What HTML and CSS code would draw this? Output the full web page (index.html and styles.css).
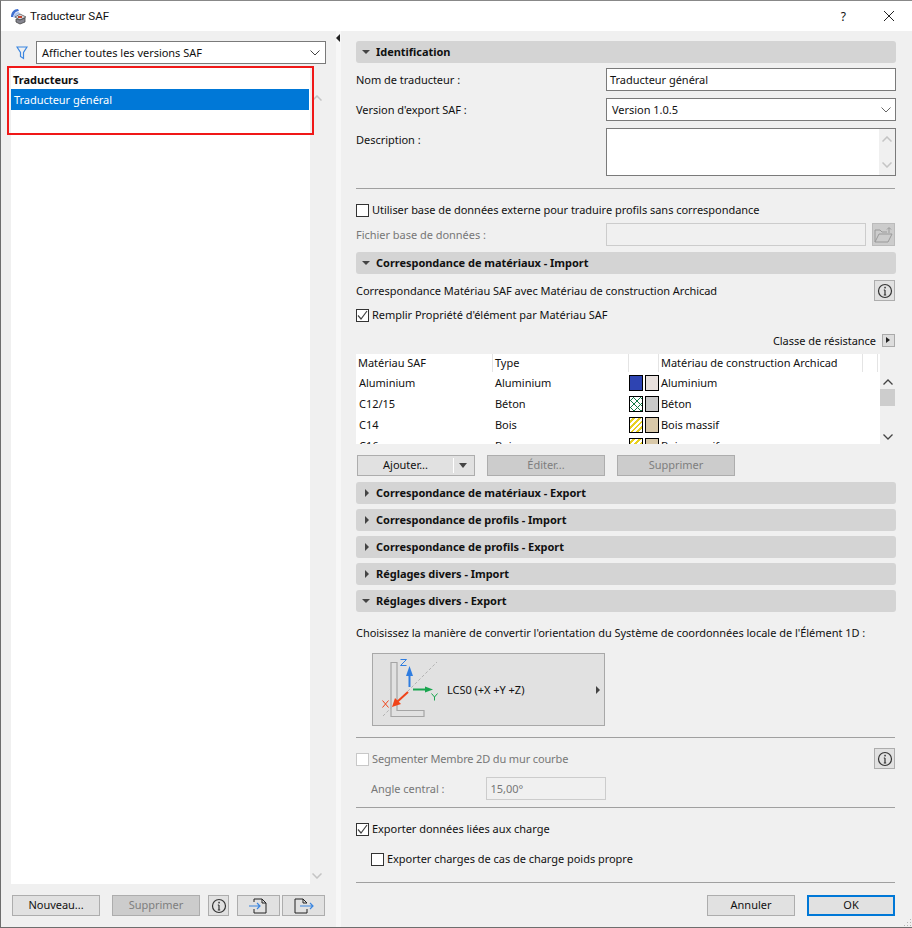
FILE: index.html
```html
<!DOCTYPE html>
<html lang="fr">
<head>
<meta charset="utf-8">
<title>Traducteur SAF</title>
<link rel="stylesheet" href="styles.css">
</head>
<body>
<div class="window">
  <header class="titlebar">
    <svg class="appicon" width="17" height="17" viewBox="0 0 17 17"><path d="M1 9 C1 4 4 1 8 1 L9 3 C6 3 4 5 3 9 Z" fill="#3f6fd0"/><path d="M3 9 C4 6 6 4 9 4 L10 6 C7 6 6 8 5 10 Z" fill="#a9c0ee"/><path d="M5 9 L10 6 L16 9 L10 12 Z" fill="#d8d8de" stroke="#555" stroke-width=".8"/><path d="M6 11 V14 L10 16 L15 14 V10 L10 12 Z" fill="#85858f" stroke="#444" stroke-width=".8"/><path d="M8 9 L12 9" stroke="#c0452f" stroke-width="2"/></svg>
    <span class="title">Traducteur SAF</span>
    <span class="help">?</span>
    <svg class="close" width="12" height="12" viewBox="0 0 12 12"><path d="M1 1 L11 11 M11 1 L1 11" stroke="#222" stroke-width="1"/></svg>
  </header>
  <div class="content">
    <aside class="left">
      <div class="filter">
        <svg width="12" height="14" viewBox="0 0 12 14"><path d="M1 1 H11 L7.5 6.5 V12.5 L4.5 10.5 V6.5 Z" fill="none" stroke="#3b86e0" stroke-width="1.2"/></svg>
        <div class="select filter-select"><span>Afficher toutes les versions SAF</span><svg class="chev" width="10" height="6" viewBox="0 0 10 6"><path d="M0.5 0.5 L5 5 L9.5 0.5" fill="none" stroke="#444"/></svg></div>
      </div>
      <div class="listwrap">
        <div class="list">
          <div class="list-head">Traducteurs</div>
          <div class="list-sel">Traducteur général</div>
        </div>
        <div class="list-scroll">
          <svg width="10" height="6" viewBox="0 0 10 6"><path d="M0.5 5.5 L5 1 L9.5 5.5" fill="none" stroke="#c4c4c4" stroke-width="1.5"/></svg>
          <svg width="10" height="6" viewBox="0 0 10 6"><path d="M0.5 0.5 L5 5 L9.5 0.5" fill="none" stroke="#c4c4c4" stroke-width="1.5"/></svg>
        </div>
        <div class="redbox"></div>
      </div>
      <div class="left-actions">
        <button class="btn new">Nouveau...</button>
        <button class="btn del disabled">Supprimer</button>
        <button class="btn info"><svg width="16" height="16" viewBox="0 0 16 16"><circle cx="8" cy="8" r="6.5" fill="none" stroke="#333" stroke-width="1.2"/><path d="M8 7 V12 M6.8 12 H9.2 M6.8 7 H8" stroke="#333" stroke-width="1.2" fill="none"/><rect x="7.3" y="3.8" width="1.5" height="1.6" fill="#333"/></svg></button>
        <button class="btn io first"><svg width="22" height="16" viewBox="0 0 22 16"><path d="M6 4 V1 H14 L18 5 V15 H6 V11" fill="none" stroke="#222"/><path d="M14 1 V5 H18" fill="none" stroke="#222"/><path d="M1 8 H12 M9 5 L12 8 L9 11" fill="none" stroke="#3b86e0" stroke-width="1.2"/></svg></button>
        <button class="btn io"><svg width="22" height="16" viewBox="0 0 22 16"><path d="M14 5 L10 1 H2 V15 H14 V11" fill="none" stroke="#222"/><path d="M10 1 V5 H14" fill="none" stroke="#222"/><path d="M7 8 H20 M17 5 L20 8 L17 11" fill="none" stroke="#3b86e0" stroke-width="1.2"/></svg></button>
      </div>
    </aside>
    <div class="splitter"><i></i></div>
    <main class="right">
      <div class="section open first-sec">Identification</div>
      <div class="row r-name"><label>Nom de traducteur :</label><div class="input">Traducteur général</div></div>
      <div class="row r-ver"><label>Version d'export SAF :</label><div class="select ver"><span>Version 1.0.5</span><svg class="chev" width="10" height="6" viewBox="0 0 10 6"><path d="M0.5 0.5 L5 5 L9.5 0.5" fill="none" stroke="#666"/></svg></div></div>
      <div class="row r-desc"><label>Description :</label>
        <div class="textarea"><div class="ta-scroll"><svg width="10" height="6" viewBox="0 0 10 6"><path d="M0.5 5.5 L5 1 L9.5 5.5" fill="none" stroke="#c4c4c4" stroke-width="1.5"/></svg><svg width="10" height="6" viewBox="0 0 10 6"><path d="M0.5 0.5 L5 5 L9.5 0.5" fill="none" stroke="#c4c4c4" stroke-width="1.5"/></svg></div></div>
      </div>
      <hr class="sep s1">
      <div class="check c-db"><span class="box"></span>Utiliser base de données externe pour traduire profils sans correspondance</div>
      <div class="row r-file dim"><label>Fichier base de données :</label><div class="file-in"></div>
        <div class="folder"><svg width="20" height="18" viewBox="0 0 20 18"><path d="M1 16 V4 H6 L8 6 H13 M1 16 H14 L18 8 H5 L1 16" fill="none" stroke="#9a9a9a"/><path d="M15 7 V2 M13 3.5 L15 1.5 L17 3.5" fill="none" stroke="#9a9a9a"/></svg></div>
      </div>
      <div class="section open s-mat">Correspondance de matériaux - Import</div>
      <div class="row r-corr"><span>Correspondance Matériau SAF avec Matériau de construction Archicad</span>
        <button class="btn info sm"><svg width="16" height="16" viewBox="0 0 16 16"><circle cx="8" cy="8" r="6.5" fill="none" stroke="#333" stroke-width="1.2"/><path d="M8 7 V12 M6.8 12 H9.2 M6.8 7 H8" stroke="#333" stroke-width="1.2" fill="none"/><rect x="7.3" y="3.8" width="1.5" height="1.6" fill="#333"/></svg></button>
      </div>
      <div class="check c-fill"><span class="box on"><svg width="13" height="13" viewBox="0 0 13 13"><path d="M2 6.5 L5 10 L11 2" fill="none" stroke="#444" stroke-width="1.2"/></svg></span>Remplir Propriété d'élément par Matériau SAF</div>
      <div class="classe"><span>Classe de résistance</span><span class="sq"></span></div>
      <div class="table">
        <div class="t-main">
          <div class="t-row t-head"><span>Matériau SAF</span><span>Type</span><span></span><span>Matériau de construction Archicad</span><span></span></div>
          <div class="t-body">
            <div class="t-row"><span>Aluminium</span><span>Aluminium</span><span class="sw"><b class="a1"></b><b class="a2"></b></span><span>Aluminium</span></div>
            <div class="t-row"><span>C12/15</span><span>Béton</span><span class="sw"><b class="b1"><svg width="14" height="14" viewBox="0 0 14 14"><path d="M0 4 L4 0 M0 11 L11 0 M4 14 L14 4 M11 14 L14 11 M0 3 L11 14 M3 0 L14 11 M0 10 L4 14 M10 0 L14 4" stroke="#0f7a45" fill="none"/></svg></b><b class="b2"></b></span><span>Béton</span></div>
            <div class="t-row"><span>C14</span><span>Bois</span><span class="sw"><b class="c1"></b><b class="c2"></b></span><span>Bois massif</span></div>
            <div class="t-row"><span>C16</span><span>Bois</span><span class="sw"><b class="c1"></b><b class="c2"></b></span><span>Bois massif</span></div>
          </div>
        </div>
        <div class="t-scroll">
          <svg width="10" height="6" viewBox="0 0 10 6"><path d="M0.5 5.5 L5 1 L9.5 5.5" fill="none" stroke="#444" stroke-width="1.3"/></svg>
          <i></i>
          <svg class="dn" width="10" height="6" viewBox="0 0 10 6"><path d="M0.5 0.5 L5 5 L9.5 0.5" fill="none" stroke="#444" stroke-width="1.3"/></svg>
        </div>
      </div>
      <div class="t-actions">
        <button class="btn add"><span class="add-l">Ajouter...</span><span class="add-r"></span></button>
        <button class="btn t-dis disabled">Éditer...</button>
        <button class="btn t-dis disabled">Supprimer</button>
      </div>
      <div class="section closed s-a">Correspondance de matériaux - Export</div>
      <div class="section closed s-b">Correspondance de profils - Import</div>
      <div class="section closed s-b">Correspondance de profils - Export</div>
      <div class="section closed s-b">Réglages divers - Import</div>
      <div class="section open s-b">Réglages divers - Export</div>
      <p class="choose">Choisissez la manière de convertir l'orientation du Système de coordonnées locale de l'Élément 1D :</p>
      <div class="lcs">
        <svg width="72" height="71" viewBox="0 0 72 71">
          <path d="M18 8.5 H24 V56.5 H51 V62.5 H18 Z" fill="none" stroke="#a4a4a4" stroke-width="1.2"/>
          <path d="M10 62 L64 8" stroke="#b4b4b4" stroke-dasharray="3 2"/>
          <path d="M36.5 33 V20" stroke="#2f7de0" stroke-width="2"/><path d="M33 22 L36.5 12 L40 22 Z" fill="#2f7de0"/>
          <path d="M40 35.5 H53" stroke="#19a54f" stroke-width="2"/><path d="M52 32.5 L60 35.5 L52 38.5 Z" fill="#19a54f"/>
          <path d="M35 38 L24 48" stroke="#f0441a" stroke-width="2"/><path d="M19 53 L22 44 L28 50 Z" fill="#f0441a"/>
          <path d="M9.5 46.5 L15.5 53.5 M15.5 46.5 L9.5 53.5" stroke="#f0441a" fill="none"/>
          <path d="M27.5 5.5 H33.5 L27.5 11.5 H33.5" stroke="#2f7de0" fill="none"/>
          <path d="M58.5 39.5 L61.5 43 L64.5 39.5 M61.5 43 V46.5" stroke="#19a54f" fill="none"/>
        </svg>
        <span class="lcs-t">LCS0 (+X +Y +Z)</span>
        <span class="tri"></span>
      </div>
      <hr class="sep s2">
      <div class="row r-seg dim"><div class="check seg"><span class="box off"></span>Segmenter Membre 2D du mur courbe</div>
        <button class="btn info sm"><svg width="16" height="16" viewBox="0 0 16 16"><circle cx="8" cy="8" r="6.5" fill="none" stroke="#333" stroke-width="1.2"/><path d="M8 7 V12 M6.8 12 H9.2 M6.8 7 H8" stroke="#333" stroke-width="1.2" fill="none"/><rect x="7.3" y="3.8" width="1.5" height="1.6" fill="#333"/></svg></button>
      </div>
      <div class="row r-angle dim"><label>Angle central :</label><div class="angle">15,00°</div></div>
      <hr class="sep s3">
      <div class="check c-exp"><span class="box on"><svg width="13" height="13" viewBox="0 0 13 13"><path d="M2 6.5 L5 10 L11 2" fill="none" stroke="#444" stroke-width="1.2"/></svg></span>Exporter données liées aux charge</div>
      <div class="check c-exp2"><span class="box"></span>Exporter charges de cas de charge poids propre</div>
      <hr class="sep s4">
      <div class="footer"><button class="btn foot">Annuler</button><button class="btn foot ok">OK</button></div>
    </main>
  </div>
  <div class="grip"></div>
</div>
</body>
</html>
```
FILE: styles.css
```css
* { box-sizing: border-box; }
html, body { margin: 0; padding: 0; }
body { width: 912px; height: 928px; overflow: hidden; font-family: "Noto Sans", "Liberation Sans", sans-serif; font-size: 11px; letter-spacing: -0.03px; color: #111; background: #f0f0f0; }
.window { width: 912px; height: 928px; display: flex; flex-direction: column; border: 1px solid #6e6e6e; border-right: 0; border-top-color: #888; position: relative; }
.grip { position: absolute; right: 1px; bottom: 1px; width: 8px; height: 8px; background: radial-gradient(circle, #b4b4b4 1px, transparent 1px) 0 0 / 3px 3px; clip-path: polygon(100% 0, 100% 100%, 0 100%); }
.titlebar { height: 30px; flex: none; background: #fff; display: flex; align-items: center; padding-left: 9px; }
.appicon { flex: none; }
.title { margin-left: 3px; font-family: Roboto, "Noto Sans", sans-serif; font-size: 11.6px; }
.help { margin-left: auto; font-size: 12px; }
.close { margin: 0 17px 0 37px; }
.content { flex: 1; display: flex; min-height: 0; }
.left { width: 335px; flex: none; display: flex; flex-direction: column; padding: 10px 0 0 10px; }
.filter { display: flex; align-items: center; height: 23px; gap: 8px; padding-left: 5px; }
.select { background: #fff; border: 1px solid #7a7a7a; display: flex; align-items: center; justify-content: space-between; }
.filter-select { width: 290px; height: 23px; padding: 0 5px; }
.chev { flex: none; }
.listwrap { position: relative; display: flex; margin-top: 2px; height: 818px; }
.list { width: 299px; background: #fff; }
.list-head { font-weight: 700; height: 23px; padding: 6px 0 0 2px; line-height: 15px; }
.list-sel { height: 21px; width: 298px; background: #0078d7; color: #fff; padding-left: 3px; line-height: 21px; }
.list-scroll { width: 14px; display: flex; flex-direction: column; justify-content: space-between; align-items: center; padding: 29px 0 5px; }
.redbox { position: absolute; left: -4px; top: 0; width: 307px; height: 69px; border: 2px solid #f01818; }
.left-actions { display: flex; margin-top: 11px; padding-left: 1px; }
.btn { height: 21px; background: #e1e1e1; border: 1px solid #adadad; font: inherit; letter-spacing: inherit; color: #111; padding: 0 0 2px; display: flex; align-items: center; justify-content: center; }
.btn.info, .btn.io { padding: 0; }
.btn.disabled { background: #cccccc; color: #7e7e7e; }
.new, .del { width: 88px; }
.del { margin-left: 12px; }
.info { width: 21px; margin-left: 8px; }
.info.sm { margin: 0 1px 0 0; }
.io { width: 43px; }
.io.first { margin-left: 8px; margin-right: 2px; }
.splitter { width: 5px; flex: none; position: relative; background: #f7f7f7; }
.splitter i { position: absolute; left: 0; top: 3px; border: 4px solid transparent; border-right: 4px solid #222; border-left: 0; }
.right { flex: 1; padding: 10px 16px 0 15px; display: flex; flex-direction: column; min-width: 0; }
.section { height: 22px; flex: none; background: #d4d4d4; border-radius: 3px; font-weight: 700; display: flex; align-items: center; padding: 0 0 2px 20px; position: relative; }
.section::before { content: ""; position: absolute; }
.section.open::before { left: 6px; top: 9px; border: 4px solid transparent; border-top: 4px solid #444; border-bottom: 0; }
.section.closed::before { left: 9px; top: 7px; border: 4px solid transparent; border-left: 4px solid #444; border-right: 0; }
.row { display: flex; flex: none; justify-content: space-between; }
.row > label { line-height: 15px; }
.input, .ver { width: 290px; height: 23px; }
.input { background: #fff; border: 1px solid #7a7a7a; line-height: 21px; padding-left: 3px; }
.ver { padding: 0 4px 0 5px; }
.r-name { margin-top: 5px; align-items: center; }
.r-ver { margin-top: 7px; align-items: center; }
.r-desc { margin-top: 7px; }
.r-desc label { margin-top: 4px; }
.textarea { width: 290px; height: 48px; background: #fff; border: 1px solid #7a7a7a; display: flex; justify-content: flex-end; }
.ta-scroll { width: 16px; background: #f0f0f0; display: flex; flex-direction: column; justify-content: space-between; align-items: center; padding: 7px 0 7px; }
.sep { width: 539px; margin: 0; border: 0; border-top: 1px solid #a0a0a0; flex: none; }
.s1 { margin-top: 12px; }
.check { display: flex; align-items: center; flex: none; height: 15px; }
.check.seg { letter-spacing: -0.14px; }
.box { width: 13px; height: 13px; border: 1px solid #333; background: #fff; margin: 2px 3px 0 0; flex: none; display: block; position: relative; }
.box svg { position: absolute; left: -1px; top: -1px; }
.box.off { border-color: #c8c8c8; }
.c-db { margin-top: 13px; }
.dim { color: #777; }
.r-file { margin-top: 6px; height: 23px; align-items: center; justify-content: flex-start; }
.file-in { width: 260px; height: 23px; margin-left: auto; background: #f0f0f0; border: 1px solid #ccc; }
.folder { width: 23px; height: 23px; margin: 0 1px 0 6px; background: #ccc; border: 1px solid #bbb; display: flex; align-items: center; justify-content: center; }
.s-mat { margin-top: 6px; }
.r-corr { margin-top: 6px; height: 21px; align-items: center; }
.c-fill { margin-top: 6px; }
.classe { display: flex; justify-content: flex-end; align-items: center; height: 15px; flex: none; margin: 11px 1px 0 0; gap: 6px; }
.sq { width: 13px; height: 13px; background: #ddd; border: 1px solid #aaa; position: relative; display: block; }
.sq::after { content: ""; position: absolute; left: 3px; top: 2px; border: 3.5px solid transparent; border-left: 4px solid #222; border-right: 0; }
.table { display: flex; height: 90px; flex: none; margin-top: 6px; }
.t-main { width: 524px; background: #fff; overflow: hidden; }
.t-row { display: grid; grid-template-columns: 136px 134px 32px 1fr; height: 21px; align-items: center; padding-left: 3px; }
.t-head { height: 18px; grid-template-columns: 137px 136px 30px 204px 15px; background: #f0f0f0; padding-left: 0; width: 522px; }
.t-head span { height: 18px; line-height: 18px; border-right: 1px solid #e4e4e4; background: #fff; padding-left: 2px; }
.sw { display: flex; gap: 2px; }
.sw b { display: block; width: 14px; height: 16px; border: 1px solid #000; margin: 0; }
.sw b svg { display: block; }
.a1 { background: #2e44b2; } .a2 { background: #e8e0dd; }
.b1 { background: #fff; overflow: hidden; } .b2 { background: #c8c8c8; }
.c1 { background: repeating-linear-gradient(135deg, #fff, #fff 2px, #e8d020 2px, #e8d020 4px); } .c2 { background: #d8c8a8; }
.t-scroll { width: 15px; display: flex; flex-direction: column; align-items: center; padding-top: 25px; }
.t-scroll i { display: block; width: 15px; height: 17px; background: #cdcdcd; margin-top: 4px; }
.t-scroll .dn { margin-top: 28px; }
.t-actions { display: flex; gap: 12px; margin: 11px 0 0 1px; flex: none; }
.add, .t-dis { width: 118px; height: 21px; }
.add { justify-content: flex-start; position: relative; }
.add-l { width: 89px; text-align: center; display: block; padding-left: 6px; }
.add-r { height: 15px; border-left: 1px solid #fff; margin: 2px 0 0 6px; position: relative; display: block; width: 20px; }
.add-r::after { content: ""; position: absolute; left: 5px; top: 5px; border: 4px solid transparent; border-top: 5px solid #444; border-bottom: 0; }
.s-a { margin-top: 6px; }
.s-b { margin-top: 5px; }
.choose { margin: 13px 0 0; line-height: 15px; flex: none; }
.lcs { width: 233px; height: 73px; flex: none; margin: 13px 0 0 16px; background: #e1e1e1; border: 1px solid #a8a8a8; display: flex; align-items: center; position: relative; }
.lcs svg { flex: none; }
.lcs-t { margin: 0 0 0 2px; }
.tri { position: absolute; right: 4px; top: 32px; border: 4px solid transparent; border-left: 4px solid #444; border-right: 0; }
.s2 { margin-top: 11px; }
.r-seg { margin-top: 10px; height: 21px; align-items: center; }
.r-angle { margin-top: 8px; height: 23px; align-items: center; justify-content: flex-start; padding-left: 15px; }
.angle { width: 120px; height: 23px; margin-left: 42px; border: 1px solid #ccc; line-height: 21px; padding-left: 3px; }
.s3 { margin-top: 7px; }
.c-exp { margin-top: 13px; }
.c-exp2 { margin-top: 15px; margin-left: 15px; }
.s4 { margin-top: 16px; }
.footer { display: flex; justify-content: flex-end; gap: 12px; margin: 12px 1px 0 0; }
.foot { width: 88px; height: 21px; }
.ok { border: 2px solid #0078d7; }
```
